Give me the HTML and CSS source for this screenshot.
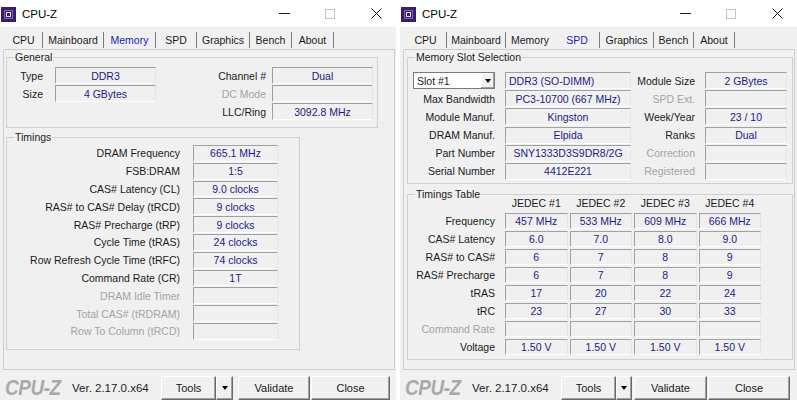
FILE: index.html
```html
<!DOCTYPE html>
<html>
<head>
<meta charset="utf-8">
<link rel="stylesheet" href="styles.css">
</head>
<body>
<div class="desk">
  <div class="win win-l">
    <div class="titlebar">
      <svg class="app-icon" width="15" height="15" viewBox="0 0 15 15"><rect width="15" height="15" fill="#3a1c6c"/><rect x="3.5" y="3.5" width="8" height="8" fill="none" stroke="#c9b8ee" stroke-width="1" stroke-dasharray="1 1"/><rect x="5.5" y="5.5" width="4" height="4" fill="none" stroke="#e6dcff" stroke-width="1"/></svg>
      <span class="title">CPU-Z</span>
      <div class="caps">
        <div class="cap"><span class="cap-min"></span></div>
        <div class="cap"><span class="cap-max"></span></div>
        <div class="cap"><svg width="11" height="11" viewBox="0 0 11 11"><path d="M0.5 0.5 L10.5 10.5 M10.5 0.5 L0.5 10.5" stroke="#111" stroke-width="1"/></svg></div>
      </div>
    </div>
    <div class="tabs">
      <div class="tab" style="width:38px">CPU</div>
      <div class="tab" style="width:61px">Mainboard</div>
      <div class="tab sel" style="width:52px">Memory</div>
      <div class="tab" style="width:41px">SPD</div>
      <div class="tab" style="width:53px">Graphics</div>
      <div class="tab" style="width:42px">Bench</div>
      <div class="tab" style="width:42px">About</div>
    </div>
    <div class="panel panel-l">
      <div class="group gen">
        <span class="legend">General</span>
        <div class="lbl c1">Type</div><div class="val">DDR3</div><div class="lbl c3">Channel #</div><div class="val">Dual</div>
        <div class="lbl c1">Size</div><div class="val">4 GBytes</div><div class="lbl c3 dis">DC Mode</div><div class="val"></div>
        <div></div><div></div><div class="lbl c3">LLC/Ring</div><div class="val">3092.8 MHz</div>
      </div>
      <div class="group tim">
        <span class="legend">Timings</span>
        <div class="lbl">DRAM Frequency</div><div class="val">665.1 MHz</div>
        <div class="lbl">FSB:DRAM</div><div class="val">1:5</div>
        <div class="lbl">CAS# Latency (CL)</div><div class="val">9.0 clocks</div>
        <div class="lbl">RAS# to CAS# Delay (tRCD)</div><div class="val">9 clocks</div>
        <div class="lbl">RAS# Precharge (tRP)</div><div class="val">9 clocks</div>
        <div class="lbl">Cycle Time (tRAS)</div><div class="val">24 clocks</div>
        <div class="lbl">Row Refresh Cycle Time (tRFC)</div><div class="val">74 clocks</div>
        <div class="lbl">Command Rate (CR)</div><div class="val">1T</div>
        <div class="lbl dis">DRAM Idle Timer</div><div class="val"></div>
        <div class="lbl dis">Total CAS# (tRDRAM)</div><div class="val"></div>
        <div class="lbl dis">Row To Column (tRCD)</div><div class="val"></div>
      </div>
    </div>
    <div class="bottombar">
      <div class="logo"><span>CPU-Z</span></div>
      <div class="ver">Ver. 2.17.0.x64</div>
      <div class="btn b-tools">Tools</div>
      <div class="btn b-arrow"><span class="tri"></span></div>
      <div class="btn b-val">Validate</div>
      <div class="btn b-close">Close</div>
    </div>
  </div>

  <div class="win win-r">
    <div class="titlebar">
      <svg class="app-icon" width="15" height="15" viewBox="0 0 15 15"><rect width="15" height="15" fill="#3a1c6c"/><rect x="3.5" y="3.5" width="8" height="8" fill="none" stroke="#c9b8ee" stroke-width="1" stroke-dasharray="1 1"/><rect x="5.5" y="5.5" width="4" height="4" fill="none" stroke="#e6dcff" stroke-width="1"/></svg>
      <span class="title">CPU-Z</span>
      <div class="caps">
        <div class="cap"><span class="cap-min"></span></div>
        <div class="cap"><span class="cap-max"></span></div>
        <div class="cap"><svg width="11" height="11" viewBox="0 0 11 11"><path d="M0.5 0.5 L10.5 10.5 M10.5 0.5 L0.5 10.5" stroke="#111" stroke-width="1"/></svg></div>
      </div>
    </div>
    <div class="tabs">
      <div class="tab" style="width:42px">CPU</div>
      <div class="tab" style="width:59px">Mainboard</div>
      <div class="tab nosep" style="width:49px">Memory</div>
      <div class="tab sel" style="width:45px">SPD</div>
      <div class="tab" style="width:54px">Graphics</div>
      <div class="tab" style="width:40px">Bench</div>
      <div class="tab" style="width:41px">About</div>
    </div>
    <div class="panel panel-r">
      <div class="group slot">
        <span class="legend">Memory Slot Selection</span>
        <div class="select"><span class="sel-text">Slot #1</span><span class="sel-btn"><span class="tri"></span></span></div>
        <div class="val left">DDR3 (SO-DIMM)</div><div class="lbl cc">Module Size</div><div class="val">2 GBytes</div>
        <div class="lbl ca">Max Bandwidth</div><div class="val">PC3-10700 (667 MHz)</div><div class="lbl cc dis">SPD Ext.</div><div class="val"></div>
        <div class="lbl ca">Module Manuf.</div><div class="val">Kingston</div><div class="lbl cc">Week/Year</div><div class="val">23 / 10</div>
        <div class="lbl ca">DRAM Manuf.</div><div class="val">Elpida</div><div class="lbl cc">Ranks</div><div class="val">Dual</div>
        <div class="lbl ca">Part Number</div><div class="val">SNY1333D3S9DR8/2G</div><div class="lbl cc dis">Correction</div><div class="val"></div>
        <div class="lbl ca">Serial Number</div><div class="val">4412E221</div><div class="lbl cc dis">Registered</div><div class="val"></div>
      </div>
      <div class="group ttab">
        <span class="legend">Timings Table</span>
        <div></div><div class="hdr">JEDEC #1</div><div class="hdr">JEDEC #2</div><div class="hdr">JEDEC #3</div><div class="hdr">JEDEC #4</div>
        <div class="lbl ca">Frequency</div><div class="val">457 MHz</div><div class="val">533 MHz</div><div class="val">609 MHz</div><div class="val">666 MHz</div>
        <div class="lbl ca">CAS# Latency</div><div class="val">6.0</div><div class="val">7.0</div><div class="val">8.0</div><div class="val">9.0</div>
        <div class="lbl ca">RAS# to CAS#</div><div class="val">6</div><div class="val">7</div><div class="val">8</div><div class="val">9</div>
        <div class="lbl ca">RAS# Precharge</div><div class="val">6</div><div class="val">7</div><div class="val">8</div><div class="val">9</div>
        <div class="lbl ca">tRAS</div><div class="val">17</div><div class="val">20</div><div class="val">22</div><div class="val">24</div>
        <div class="lbl ca">tRC</div><div class="val">23</div><div class="val">27</div><div class="val">30</div><div class="val">33</div>
        <div class="lbl ca dis">Command Rate</div><div class="val"></div><div class="val"></div><div class="val"></div><div class="val"></div>
        <div class="lbl ca">Voltage</div><div class="val">1.50 V</div><div class="val">1.50 V</div><div class="val">1.50 V</div><div class="val">1.50 V</div>
      </div>
    </div>
    <div class="bottombar">
      <div class="logo"><span>CPU-Z</span></div>
      <div class="ver">Ver. 2.17.0.x64</div>
      <div class="btn b-tools">Tools</div>
      <div class="btn b-arrow"><span class="tri"></span></div>
      <div class="btn b-val">Validate</div>
      <div class="btn b-close">Close</div>
    </div>
  </div>
</div>
</body>
</html>
```

FILE: styles.css
```css
* { box-sizing: border-box; }
body {
  margin: 0;
  font-family: "Liberation Sans", Arial, sans-serif;
  font-size: 10.5px;
  color: #1a1a1a;
}
.desk {
  display: flex;
  gap: 4px;
  width: 797px;
  height: 400px;
  overflow: hidden;
  background: #ffffff;
}
.win {
  width: 396px;
  height: 400px;
  background: #f0f0f0;
  display: flex;
  flex-direction: column;
  overflow: hidden;
  flex-shrink: 0;
}
.win-r { width: 397px; }

.titlebar {
  height: 27px;
  background: #fff;
  display: flex;
  align-items: center;
  flex-shrink: 0;
}
.app-icon { margin-left: 1px; margin-top: 1px; }
.title { margin-left: 6px; font-size: 11.5px; color: #000; }
.caps { margin-left: auto; margin-right: -3px; display: flex; }
.cap {
  width: 46px;
  height: 27px;
  display: flex;
  align-items: center;
  justify-content: center;
}
.cap-min { width: 11px; height: 1px; background: #222; }
.cap-max { width: 10px; height: 10px; border: 1px solid #c4c4c4; }

.tabs {
  height: 22px;
  display: flex;
  padding-left: 5px;
  flex-shrink: 0;
}
.tab {
  margin-top: 5px;
  height: 16px;
  line-height: 16px;
  text-align: center;
  border-right: 1px solid #7c7c7c;
  white-space: nowrap;
}
.tab.nosep { border-right-color: transparent; }
.tab.sel { color: #1d1da8; }

.panel {
  margin-left: 3px;
  width: 392px;
  height: 321px;
  border: 1px solid #cdcdcd;
  padding-top: 7px;
  flex-shrink: 0;
}
.panel-l { padding-left: 2px; }
.panel-r { padding-left: 3px; }

.group {
  position: relative;
  border: 1px solid #cfcfcf;
}
.legend {
  position: absolute;
  top: -7px;
  left: 7px;
  padding: 0 1px;
  line-height: 13px;
  background: #f0f0f0;
  white-space: nowrap;
}

.lbl {
  text-align: right;
  white-space: nowrap;
  align-self: center;
}
.dis { color: #a3a3a3; }
.val {
  border-top: 1px solid #a0a0a0;
  border-left: 1px solid #a0a0a0;
  border-right: 1px solid #e4e4e4;
  border-bottom: 1px solid #ffffff;
  color: #1c1c80;
  text-align: center;
  white-space: nowrap;
  overflow: hidden;
  display: flex;
  align-items: center;
  justify-content: center;
}
.val.left { justify-content: flex-start; padding-left: 3px; }

/* Memory tab */
.gen {
  width: 372px;
  height: 71px;
  padding-top: 9px;
  display: grid;
  grid-template-columns: 48px 101px 116px 101px;
  grid-auto-rows: 17px;
  row-gap: 1px;
}
.gen .c1 { padding-right: 12px; }
.gen .c3 { padding-right: 6px; }
.tim {
  margin-top: 9px;
  width: 294px;
  height: 213px;
  padding-top: 7px;
  display: grid;
  grid-template-columns: 186px 85px;
  grid-auto-rows: 16.8px;
  row-gap: 1px;
}
.tim .lbl { padding-right: 13px; }

/* SPD tab */
.slot {
  width: 386px;
  height: 127px;
  padding-top: 14px;
  display: grid;
  grid-template-columns: 97px 126px 74px 82px;
  grid-auto-rows: 17px;
  row-gap: 1.2px;
}
.slot .ca { padding-right: 10px; }
.slot .cc { padding-right: 10px; }
.select {
  margin-left: 5px;
  margin-right: 10px;
  background: #fff;
  border: 1px solid #7a7a7a;
  display: flex;
  align-items: center;
}
.sel-text { padding-left: 3px; flex: 1; }
.sel-btn {
  width: 14px;
  height: 15px;
  border-left: 1px solid #fff;
  background: #f0f0f0;
  box-shadow: inset -1px -1px #a0a0a0, inset 1px 1px #ffffff;
  display: flex;
  align-items: center;
  justify-content: center;
}
.ttab {
  margin-top: 10px;
  width: 386px;
  height: 166px;
  display: grid;
  grid-template-columns: 95px 62.5px 62.5px 62.5px 62.5px;
  grid-template-rows: repeat(9, 16px);
  column-gap: 2px;
  row-gap: 2px;
}
.ttab .ca { padding-right: 8px; }
.hdr { text-align: center; align-self: center; white-space: nowrap; }

/* bottom bar */
.bottombar {
  height: 30px;
  padding-top: 6px;
  display: flex;
  align-items: flex-start;
  flex-shrink: 0;
}
.logo {
  width: 72px;
  padding-left: 5px;
  height: 24px;
  display: flex;
  align-items: center;
}
.logo span {
  display: inline-block;
  font-size: 22px;
  font-weight: bold;
  font-style: italic;
  color: #a9a9a9;
  transform: scaleX(0.86);
  transform-origin: left center;
  letter-spacing: -0.5px;
}
.ver {
  width: 89px;
  height: 24px;
  line-height: 24px;
  font-size: 11.5px;
  color: #222;
}
.btn {
  height: 24px;
  background: #f0f0f0;
  border-top: 1px solid #fff;
  border-left: 1px solid #fff;
  border-right: 1px solid #696969;
  border-bottom: 1px solid #696969;
  box-shadow: inset -1px -1px #a0a0a0;
  display: flex;
  align-items: center;
  justify-content: center;
  font-size: 11px;
}
.b-tools { width: 55px; }
.b-arrow { width: 17px; }
.b-val { width: 72px; margin-left: 5px; }
.b-close { width: 79px; margin-left: 1px; }
.win-r .b-arrow { width: 16px; }
.win-r .b-val { width: 73px; margin-left: 2px; }
.win-r .b-close { width: 82px; margin-left: 1px; }
.tri {
  width: 0;
  height: 0;
  border-left: 3.5px solid transparent;
  border-right: 3.5px solid transparent;
  border-top: 4px solid #000;
}
```
